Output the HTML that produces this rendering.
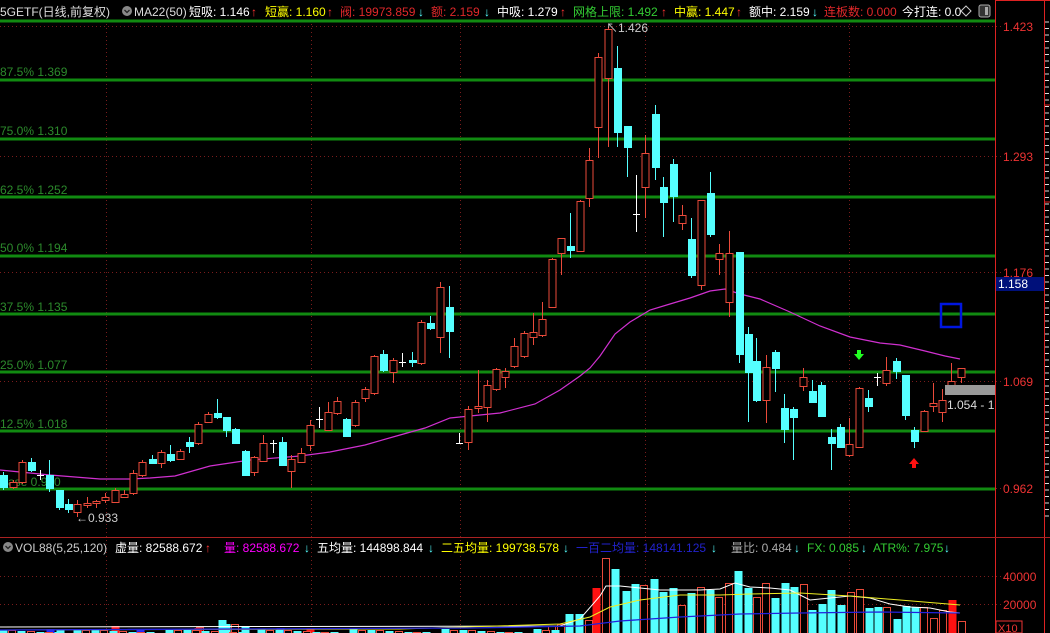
<!DOCTYPE html>
<html><head><meta charset="utf-8">
<style>
html,body{margin:0;padding:0;background:#000;width:1050px;height:633px;overflow:hidden}
svg{display:block}
text{font-family:"Liberation Sans","Noto Sans CJK SC",sans-serif;font-size:12px}
</style></head>
<body>
<svg id="s" width="1050" height="633" xmlns="http://www.w3.org/2000/svg">
<rect width="1050" height="633" fill="#000"/>
<g id="grid"></g>
<g id="main"></g>
<!-- header -->
<g>
<text x="0" y="16" fill="#ddd">5GETF(日线,前复权)</text>
<circle cx="127" cy="11" r="5" fill="#888"/><path d="M124.5 10l2.5 2.5 2.5-2.5" stroke="#222" stroke-width="1.3" fill="none"/>
<text x="134" y="16" fill="#ddd">MA22(50)</text>
<text x="189" y="16" fill="#fff">短吸: 1.146</text><text x="251" y="16" fill="#f33">↑</text>
<text x="265" y="16" fill="#ff0">短赢: 1.160</text><text x="327" y="16" fill="#f33">↑</text>
<text x="340" y="16" fill="#e0282a">阀: 19973.859</text><text x="418" y="16" fill="#5ff">↓</text>
<text x="431" y="16" fill="#e0282a">额: 2.159</text><text x="484" y="16" fill="#5ff">↓</text>
<text x="497" y="16" fill="#fff">中吸: 1.279</text><text x="560" y="16" fill="#f33">↑</text>
<text x="573" y="16" fill="#3c3">网格上限: 1.492</text><text x="661" y="16" fill="#f33">↑</text>
<text x="674" y="16" fill="#ff0">中赢: 1.447</text><text x="736" y="16" fill="#f33">↑</text>
<text x="749" y="16" fill="#fff">额中: 2.159</text><text x="812" y="16" fill="#5ff">↓</text>
<text x="824" y="16" fill="#e0282a">连板数: 0.000</text>
<text x="902" y="16" fill="#fff">今打连: 0.0</text>
<path d="M966 6l5 5-5 5-5-5z" stroke="#ccc" fill="#000"/>
<rect x="979" y="5" width="11" height="12" rx="2" fill="#333" stroke="#aaa"/><rect x="985" y="7" width="3" height="8" fill="#aaa"/>
</g>
<!-- volume header -->
<g>
<circle cx="8" cy="547" r="5" fill="#888"/><path d="M5.5 546l2.5 2.5 2.5-2.5" stroke="#222" stroke-width="1.3" fill="none"/>
<text x="15" y="552" fill="#ccc">VOL88(5,25,120)</text>
<text x="115" y="552" fill="#fff">虚量: 82588.672</text><text x="205" y="552" fill="#f33">↑</text>
<text x="224" y="552" fill="#f0f">量: 82588.672</text><text x="304" y="552" fill="#5ff">↓</text>
<text x="317" y="552" fill="#fff">五均量: 144898.844</text><text x="428" y="552" fill="#5ff">↓</text>
<text x="441" y="552" fill="#ff0">二五均量: 199738.578</text><text x="563" y="552" fill="#5ff">↓</text>
<text x="576" y="552" fill="#22c">一百二均量: 148141.125</text><text x="711" y="552" fill="#5ff">↓</text>
<text x="731" y="552" fill="#aaa">量比: 0.484</text><text x="794" y="552" fill="#5ff">↓</text>
<text x="807" y="552" fill="#3c3">FX: 0.085</text><text x="861" y="552" fill="#5ff">↓</text>
<text x="873" y="552" fill="#3c3">ATR%: 7.975</text><text x="944" y="552" fill="#5ff">↓</text>
</g>
<!-- axis -->
<g fill="#e33">
<text x="1003" y="31">1.423</text><text x="1003" y="161">1.293</text><text x="1003" y="277">1.176</text>
<text x="1003" y="386">1.069</text><text x="1003" y="493">0.962</text>
<text x="1003" y="581">40000</text><text x="1003" y="609">20000</text>
</g>
<rect x="996" y="277" width="48" height="14" fill="#00107a"/>
<text x="998" y="288" fill="#fff">1.158</text>
<rect x="996" y="621" width="26" height="12" fill="none" stroke="#e33"/>
<text x="998" y="632" fill="#e33" style="font-size:11px">X10</text>
<line x1="995.5" y1="0" x2="995.5" y2="633" stroke="#d22"/>
<line x1="1044.5" y1="0" x2="1044.5" y2="633" stroke="#d22"/>
<line x1="0" y1="537.5" x2="1050" y2="537.5" stroke="#a22"/>
<line x1="995" y1="0.5" x2="1050" y2="0.5" stroke="#d22"/>
<line x1="1044" y1="105" x2="1050" y2="105" stroke="#d22"/>
<line x1="1044" y1="202" x2="1050" y2="202" stroke="#d22"/>
<g id="ticks"></g>
</svg>
<script>
var NS="http://www.w3.org/2000/svg";
function el(p,t,a){var e=document.createElementNS(NS,t);for(var k in a)e.setAttribute(k,a[k]);p.appendChild(e);return e;}
var g=document.getElementById('grid'),m=document.getElementById('main');
// dotted grid
[26,156,272,381,488,576,604].forEach(function(y){el(g,'line',{x1:0,y1:y+.5,x2:1003,y2:y+.5,stroke:'#7a1c1c','stroke-dasharray':'1 3'});});
[106,311,460,645,849].forEach(function(x){el(g,'line',{x1:x+.5,y1:20,x2:x+.5,y2:633,stroke:'#7a1c1c','stroke-dasharray':'1 3'});});
// green fib lines
[21,80,139,197,256,314,372,431,489].forEach(function(y){el(g,'rect',{x:0,y:y-1.5,width:995,height:3,fill:'#118a11'});});
var labs=[[76,'87.5% 1.369'],[135,'75.0% 1.310'],[194,'62.5% 1.252'],[252,'50.0% 1.194'],[311,'37.5% 1.135'],[369,'25.0% 1.077'],[428,'12.5% 1.018'],[486,'Base 0.960']];
labs.forEach(function(l){var t=el(g,'text',{x:0,y:l[0],fill:'#2c8a2c'});t.textContent=l[1];});
// MA line
var ma=[[0,470],[50,475],[100,479],[130,479],[150,478],[175,476],[210,466],[250,460],[300,456],[330,452],[365,445],[400,435],[425,428],[450,418],[490,414],[500,413],[535,404],[560,390],[580,376],[590,368],[600,356],[615,334],[630,322],[650,310],[670,304],[690,298],[710,291],[725,289],[740,294],[760,299],[790,312],[820,326],[850,337],[880,343],[900,345],[925,351],[945,356],[960,359]];
el(m,'polyline',{points:ma.join(' '),fill:'none',stroke:'#d030d0','stroke-width':1.2});
// candles: x,type,bt,bb,wt,wb
var C=[[3,'c',475,487,472,490],[13,'r',482,487,480,489],[22,'r',462,482,460,484],[31,'c',462,470,458,472],[40,'w',475,475,470,480],[49,'c',475,488,460,492],[59,'c',490,507,490,510],[68,'c',504,509,499,513],[77,'r',504,512,500,517],[87,'r',503,505,497,508],[96,'r',501,503,500,508],[105,'r',497,500,493,503],[115,'r',490,502,488,503],[124,'r',494,497,490,498],[133,'r',473,493,470,495],[142,'r',462,475,460,477],[152,'c',459,463,455,464],[161,'r',452,463,450,468],[170,'c',454,460,445,462],[180,'r',451,459,449,460],[189,'c',442,446,437,453],[198,'r',424,443,422,445],[208,'r',414,422,412,423],[217,'c',413,417,399,419],[226,'c',417,430,417,437],[235,'c',429,443,428,444],[245,'c',451,475,450,476],[254,'r',457,472,456,476],[263,'r',443,461,435,462],[273,'w',443,443,440,453],[282,'c',442,465,437,466],[291,'r',459,471,455,488],[301,'r',453,462,448,463],[310,'r',425,445,420,451],[319,'w',419,419,407,428],[328,'r',412,430,402,430],[337,'r',401,413,397,415],[346,'c',419,436,418,437],[355,'r',402,425,400,427],[365,'r',389,398,387,402],[374,'r',356,393,355,395],[383,'c',354,370,350,372],[393,'r',360,372,358,383],[402,'w',362,362,353,367],[412,'c',360,362,352,367],[421,'r',322,363,320,365],[430,'c',323,328,316,330],[440,'r',287,337,282,353],[449,'c',307,331,286,358],[459,'w',443,443,433,443],[468,'r',409,442,406,450],[478,'r',406,408,370,413],[487,'r',385,407,380,422],[496,'r',369,389,368,391],
[505,'r',371,377,368,388],[514,'r',346,366,338,368],[524,'r',333,356,331,358],[533,'r',332,337,313,345],[542,'r',319,335,302,337],[552,'r',259,307,258,308],[561,'r',238,253,238,275],[570,'c',246,250,213,258],[580,'r',201,251,200,252],[589,'r',160,198,148,207],[598,'r',57,127,53,158],[608,'r',29,78,27,147],[617,'c',68,132,46,147],[627,'c',126,147,126,177],[636,'w',214,214,175,232],[645,'r',153,187,135,218],[655,'c',114,167,105,180],[663,'c',187,202,177,237],[673,'c',164,196,159,222],[682,'r',215,223,205,230],[691,'c',239,275,218,278],[701,'r',200,285,200,290],[710,'c',193,234,172,237],[719,'r',253,259,244,275],[729,'r',253,302,231,317],[739,'c',252,354,252,363],[748,'c',334,372,327,422],[756,'c',361,400,338,402],[766,'r',367,400,355,423],[775,'c',352,368,350,392],[784,'c',408,429,394,443],[793,'c',409,417,407,460],[803,'r',377,386,368,391],[812,'c',391,402,380,403],[821,'c',385,416,382,417],[831,'c',437,443,429,470],[840,'c',427,447,424,448],[849,'r',444,455,418,457],[859,'r',388,447,387,448],[868,'c',398,406,390,412],[877,'w',377,377,373,386],[886,'r',370,383,357,386],[896,'c',361,371,358,379],[905,'c',375,415,375,420],[914,'c',430,441,427,448],[924,'r',411,431,410,432],[933,'r',403,406,383,412],[942,'r',400,412,389,422],[951,'r',381,385,363,387],[961,'r',368,377,368,383]];
C.forEach(function(c){var x=c[0],t=c[1];
 if(t=='w'){el(m,'line',{x1:x+.5,y1:c[4],x2:x+.5,y2:c[5],stroke:'#fff'});el(m,'line',{x1:x-3,y1:c[2]+.5,x2:x+4,y2:c[2]+.5,stroke:'#fff'});return;}
 var col=t=='r'?'#ea4a3a':'#5ff';
 el(m,'line',{x1:x+.5,y1:c[4],x2:x+.5,y2:c[5],stroke:col});
 var h=Math.max(c[3]-c[2],1);
 if(t=='r')el(m,'rect',{x:x-3,y:c[2]+.5,width:7,height:h,fill:'#000',stroke:col});
 else el(m,'rect',{x:x-3,y:c[2],width:8,height:h+1,fill:col});
});
// annotations
function tx(x,y,s,f){var t=el(m,'text',{x:x,y:y,fill:f});t.textContent=s;}
tx(606,32,'↖1.426','#ccc');tx(76,522,'←0.933','#ccc');
el(m,'rect',{x:945,y:385,width:50,height:10,fill:'#999'});
tx(947,409,'1.054 - 1','#ddd');
el(m,'rect',{x:941,y:304,width:20,height:23,fill:'none',stroke:'#0016e0','stroke-width':2.5});
el(m,'path',{d:'M857 350h4v4h3l-5 6-5-6h3z',fill:'#2f2'});
el(m,'path',{d:'M912 468h4v-4h3l-5-6-5 6h3z',fill:'#f11'});
// volume bars
var V=[[615,569,'c'],[626,591,'c'],[635,584,'c'],[644,585,'r'],[654,579,'c'],[663,592,'c'],[673,588,'c'],[682,605,'r'],[691,593,'c'],[701,587,'r'],[710,590,'c'],[719,597,'r'],[729,583,'r'],[738,571,'c'],[748,588,'c'],[757,597,'r'],[766,583,'r'],[775,598,'c'],[785,583,'c'],[794,587,'c'],[804,584,'r'],[812,610,'c'],[822,604,'c'],[831,590,'c'],[841,605,'c'],[851,592,'r'],[860,589,'r'],[869,608,'c'],[878,607,'c'],[887,607,'r'],[897,619,'c'],[906,606,'c'],[915,607,'c'],[924,607,'r'],[934,618,'r'],[943,610,'r'],[952,600,'R'],[962,621,'r'],[596,588,'R'],[606,558,'r'],[569,614,'c'],[579,614,'c'],[561,624,'r'],[552,626,'r'],[589,620,'r'],[222,620,'c'],[226,624,'c'],[245,626,'c'],[235,624,'r'],[200,627,'r'],[115,626,'R'],[50,629,'B'],[140,629,'B'],[280,628,'B'],[310,628,'R'],[198,628,'R'],[60,630,'c']];
for(var x=3;x<560;x+=9.2){V.push([Math.round(x),629+Math.round((x*7)%4),(Math.round(x/9.2)%2)?'r':'c']);}
V.forEach(function(v){var col=v[2]=='c'?'#5ff':v[2]=='B'?'#22f':v[2]=='R'?'#f11':'#ea4a3a';
 if(v[2]=='r')el(m,'rect',{x:v[0]-3.5,y:v[1]+.5,width:7,height:633-v[1]+2,fill:'#000',stroke:col});
 else el(m,'rect',{x:v[0]-3.5,y:v[1],width:8,height:633-v[1],fill:col});});
el(m,'polyline',{points:'0,627 560,626 580,619 600,596 606,586 620,586 640,588 660,590 680,590 700,590 720,589 735,583 750,587 770,588 790,590 810,600 830,598 850,596 870,598 890,604 910,607 930,608 950,612 960,613',fill:'none',stroke:'#fff'});
el(m,'polyline',{points:'0,630 400,629 560,624 590,617 610,607 640,600 680,595 720,595 750,594 800,593 850,596 900,600 960,605',fill:'none',stroke:'#ee2'});
el(m,'polyline',{points:'0,630 470,628 580,626 620,621 680,617 740,614 800,613 880,612 960,613',fill:'none',stroke:'#22d','stroke-width':1.3});
// right ruler ticks
var tk=document.getElementById('ticks');
for(var y=22;y<520;y+=6.5){el(tk,'line',{x1:1045,y1:y,x2:1049,y2:y,stroke:'#ddd'});}
</script>
</body></html>
